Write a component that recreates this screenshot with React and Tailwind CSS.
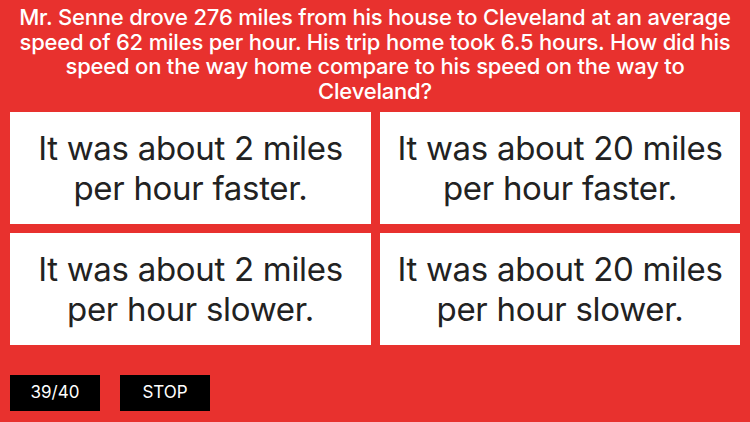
import React from 'react';

const answers = [
  ['It was about 2 miles', 'per hour faster.'],
  ['It was about 20 miles', 'per hour faster.'],
  ['It was about 2 miles', 'per hour slower.'],
  ['It was about 20 miles', 'per hour slower.'],
];

const App = () => {
  return (
    <div className='w-[750px] h-[422px] bg-[#e8312e] flex flex-col overflow-hidden' style={{ fontFamily: 'Inter, "Noto Sans", sans-serif' }}>
      <div className='h-[112px] pt-[5px] px-[18px] text-white text-center font-medium text-[22px] leading-[24.5px] tracking-[-0.2px]'>
        Mr. Senne drove 276 miles from his house to Cleveland at an average speed of 62 miles per hour. His trip home took 6.5 hours. How did his speed on the way home compare to his speed on the way to Cleveland?
      </div>
      <div className='grid grid-cols-[361px_360px] grid-rows-[112px_112px] gap-x-[9px] gap-y-[9px] pl-[10px]'>
        {answers.map((a, i) => (
          <div key={i} className='bg-white flex flex-col items-center justify-center text-[#222] text-[33px] leading-[40px] tracking-[-0.3px]'>
            <span>{a[0]}</span>
            <span>{a[1]}</span>
          </div>
        ))}
      </div>
      <div className='flex gap-[20px] pl-[10px] mt-[30px]'>
        <div className='w-[90px] h-[36px] bg-black text-white text-[17px] flex items-center justify-center'>39/40</div>
        <div className='w-[90px] h-[36px] bg-black text-white text-[17px] flex items-center justify-center'>STOP</div>
      </div>
    </div>
  );
};

export default App;
